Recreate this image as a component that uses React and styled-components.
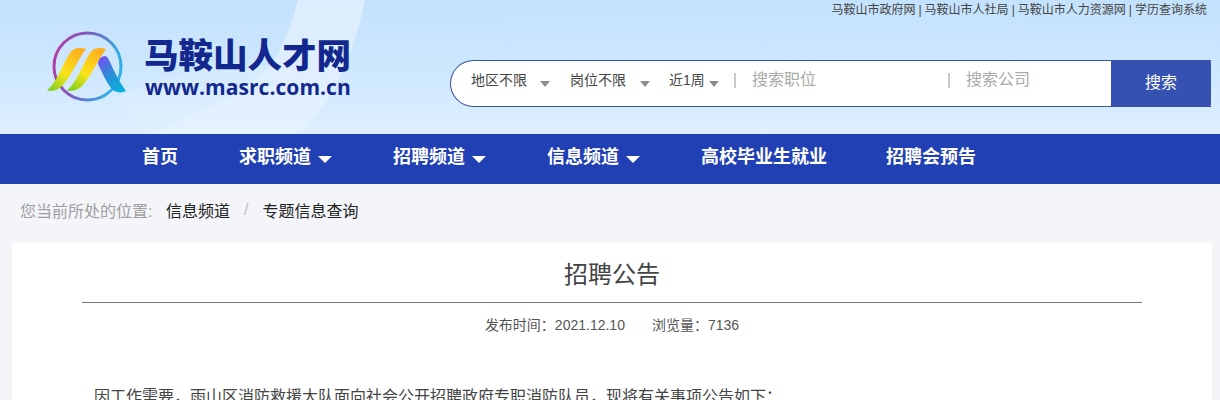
import React from "react";
import styled, { createGlobalStyle } from "styled-components";

const GlobalStyle = createGlobalStyle`
  html, body {
    margin: 0;
    padding: 0;
    background: #f3f5f8;
    overflow: hidden;
    font-family: "Liberation Sans", "Noto Sans CJK SC", sans-serif;
  }
`;

const Header = styled.header`
  position: relative;
  height: 134px;
  overflow: hidden;
  background: linear-gradient(180deg, #c4e2fd 0%, #cde7fe 50%, #deefff 100%);
`;

const HeaderArt = styled.svg`
  position: absolute;
  left: 0;
  top: 0;
`;

const HeaderInner = styled.div`
  position: relative;
  display: flex;
  flex-direction: column;
  height: 100%;
`;

const TopLinks = styled.div`
  height: 20px;
  padding-right: 13px;
  text-align: right;
  font-size: 12px;
  line-height: 20px;
  word-spacing: -0.3px;
  color: #444;
`;

const HeaderRow = styled.div`
  display: flex;
  align-items: flex-start;
`;

const Brand = styled.div`
  display: flex;
  width: 450px;
  flex: none;
  padding-left: 44px;
  box-sizing: border-box;
  margin-top: 8px;
`;

const BrandText = styled.div`
  margin-left: 14px;
  margin-top: 4px;
  color: #12288f;
`;

const BrandName = styled.div`
  font-size: 34.5px;
  font-weight: 900;
  line-height: 48px;
  white-space: nowrap;
`;

const BrandUrl = styled.div`
  font-family: "Open Sans", sans-serif;
  font-size: 21px;
  font-weight: 700;
  line-height: 24px;
  margin-top: -5px;
  margin-left: 1px;
  letter-spacing: 0.05px;
  white-space: nowrap;
`;

const SearchBar = styled.div`
  display: flex;
  width: 761px;
  height: 47px;
  margin-top: 40px;
  box-sizing: border-box;
  align-items: stretch;
  background: #fff;
  border: 1px solid #3a52a0;
  border-right: none;
  border-radius: 24px 0 0 24px;
`;

const SelectBox = styled.div`
  display: flex;
  width: ${(p) => p.$w}px;
  flex: none;
  align-items: center;
  box-sizing: border-box;
  padding-bottom: 10px;
  font-size: 14px;
  color: #444;
`;

const Caret = styled.i`
  width: 0;
  height: 0;
  margin-left: ${(p) => p.$gap}px;
  margin-top: 11px;
  border-top: 6px solid #8e8e8e;
  border-left: 5px solid transparent;
  border-right: 5px solid transparent;
`;

const Selects = styled.div`
  display: flex;
  padding-left: 20px;
`;

const Field = styled.div`
  display: flex;
  width: ${(p) => p.$w}px;
  flex: none;
  align-items: center;
  padding-bottom: 12px;
  font-size: 16px;
  color: #aaa;
`;

const FieldBar = styled.span`
  width: 2px;
  height: 15px;
  margin-top: 5px;
  margin-right: 16px;
  background: #c8c8c8;
`;

const SearchButton = styled.button`
  width: 100px;
  margin: -1px 0 -1px auto;
  padding: 0 0 6px;
  border: none;
  border-radius: 0 3px 3px 0;
  background: #3652b0;
  color: #fff;
  font-family: inherit;
  font-size: 16px;
`;

const Nav = styled.nav`
  display: flex;
  height: 50px;
  padding-left: 142px;
  background: #2040b3;
  color: #fff;
  font-size: 18px;
  font-weight: 700;
  line-height: 46px;
`;

const NavItem = styled.div`
  display: flex;
  width: ${(p) => p.$w}px;
  flex: none;
  white-space: nowrap;
`;

const NavCaret = styled.i`
  width: 0;
  height: 0;
  margin-left: 7px;
  margin-top: 22px;
  border-top: 7px solid #fff;
  border-left: 7px solid transparent;
  border-right: 7px solid transparent;
`;

const Crumbs = styled.div`
  display: flex;
  height: 59px;
  padding-left: 20px;
  padding-bottom: 7px;
  box-sizing: border-box;
  align-items: center;
  font-size: 16px;
  color: #222;
`;

const CrumbLabel = styled.span`
  width: 146px;
  color: #a0a0a0;
`;

const CrumbSep = styled.span`
  margin: 0 14px 0 14px;
  color: #bbb;
`;

const Card = styled.main`
  margin: 0 8px 0 12px;
  padding: 0 70px;
  min-height: 300px;
  background: #fff;
`;

const Title = styled.h1`
  margin: 0;
  height: 59px;
  border-bottom: 1px solid #777;
  text-align: center;
  font-size: 24px;
  font-weight: 400;
  line-height: 64px;
  color: #444;
`;

const Meta = styled.div`
  display: flex;
  justify-content: center;
  gap: 27px;
  margin-top: 11px;
  font-size: 14px;
  line-height: 22px;
  color: #555;
`;

const Body = styled.p`
  margin: 49px 0 0 12px;
  font-size: 16px;
  line-height: 24px;
  color: #444;
  white-space: nowrap;
`;

function Logo() {
  return (
    <svg width="86" height="80" viewBox="44 28 86 80">
      <defs>
        <linearGradient id="ring" x1="0" y1="0" x2="1" y2="0.3">
          <stop offset="0" stopColor="#c0349a" />
          <stop offset="0.5" stopColor="#7a5cc4" />
          <stop offset="1" stopColor="#2fb0e6" />
        </linearGradient>
        <linearGradient id="leaf" x1="0.75" y1="0" x2="0.1" y2="1">
          <stop offset="0" stopColor="#fdae1f" />
          <stop offset="0.55" stopColor="#fbe41a" />
          <stop offset="1" stopColor="#7fcf1c" />
        </linearGradient>
        <linearGradient id="peak" x1="0.1" y1="0" x2="0.8" y2="1">
          <stop offset="0" stopColor="#7a4df0" />
          <stop offset="0.5" stopColor="#2b8fd8" />
          <stop offset="1" stopColor="#06b0dc" />
        </linearGradient>
      </defs>
      <circle cx="87.5" cy="66.5" r="33.5" fill="none" stroke="url(#ring)" strokeWidth="3" />
      <path d="M86 49C79 47 73 48 70 53C62 65 58 81 47 90.5C53 91.5 59 90 63 85C71 76 78 60 86 49Z" fill="url(#leaf)" />
      <path d="M106 49C99 47 93 48 90 53C82 65 78 81 67 90.5C73 91.5 79 90 83 85C91 76 98 60 106 49Z" fill="url(#leaf)" />
      <path d="M105 56C101 56 98 60 98 64C103 74 107 84 113 90C117 93 122 93 126 91C120 83 114 71 110 62C108 58 107 56 105 56Z" fill="url(#peak)" />
    </svg>
  );
}

const selects = [
  { label: "地区不限", w: 99, gap: 13 },
  { label: "岗位不限", w: 99, gap: 14 },
  { label: "近1周", w: 65, gap: 4 },
];

const navItems = [
  { label: "首页", w: 97 },
  { label: "求职频道", w: 154, caret: true },
  { label: "招聘频道", w: 154, caret: true },
  { label: "信息频道", w: 154, caret: true },
  { label: "高校毕业生就业", w: 185 },
  { label: "招聘会预告", w: 100 },
];

export default function App() {
  return (
    <>
      <GlobalStyle />
      <Header>
        <HeaderArt width="1220" height="134" viewBox="0 0 1220 134">
          <path d="M298 0C290 30 282 50 270 66C225 60 160 75 113 100L150 134H300C335 100 355 50 365 0Z" fill="#e2f1ff" fillOpacity="0.35" />
          <path d="M298 0C290 30 282 50 270 66C235 100 180 120 150 134H300C335 100 355 50 365 0Z" fill="#eaf5ff" fillOpacity="0.45" />
        </HeaderArt>
        <HeaderInner>
          <TopLinks>马鞍山市政府网 | 马鞍山市人社局 | 马鞍山市人力资源网 | 学历查询系统</TopLinks>
          <HeaderRow>
            <Brand>
              <Logo />
              <BrandText>
                <BrandName>马鞍山人才网</BrandName>
                <BrandUrl>www.masrc.com.cn</BrandUrl>
              </BrandText>
            </Brand>
            <SearchBar>
              <Selects>
                {selects.map((s) => (
                  <SelectBox key={s.label} $w={s.w}>
                    {s.label}
                    <Caret $gap={s.gap} />
                  </SelectBox>
                ))}
              </Selects>
              <Field $w={214}>
                <FieldBar />
                搜索职位
              </Field>
              <Field $w={160}>
                <FieldBar />
                搜索公司
              </Field>
              <SearchButton>搜索</SearchButton>
            </SearchBar>
          </HeaderRow>
        </HeaderInner>
      </Header>
      <Nav>
        {navItems.map((n) => (
          <NavItem key={n.label} $w={n.w}>
            {n.label}
            {n.caret && <NavCaret />}
          </NavItem>
        ))}
      </Nav>
      <Crumbs>
        <CrumbLabel>您当前所处的位置:</CrumbLabel>
        信息频道
        <CrumbSep>/</CrumbSep>
        专题信息查询
      </Crumbs>
      <Card>
        <Title>招聘公告</Title>
        <Meta>
          <span>发布时间：2021.12.10</span>
          <span>浏览量：7136</span>
        </Meta>
        <Body>因工作需要，雨山区消防救援大队面向社会公开招聘政府专职消防队员，现将有关事项公告如下：</Body>
      </Card>
    </>
  );
}
